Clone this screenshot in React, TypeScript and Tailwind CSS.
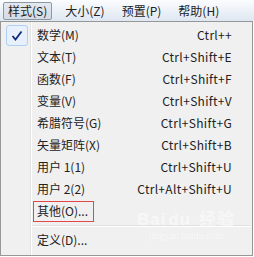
import React from "react";

const topMenus = [
  { label: "样式(S)", active: true },
  { label: "大小(Z)" },
  { label: "预置(P)" },
  { label: "帮助(H)" },
];

const items = [
  { label: "数学(M)", shortcut: "Ctrl++", checked: true },
  { label: "文本(T)", shortcut: "Ctrl+Shift+E" },
  { label: "函数(F)", shortcut: "Ctrl+Shift+F" },
  { label: "变量(V)", shortcut: "Ctrl+Shift+V" },
  { label: "希腊符号(G)", shortcut: "Ctrl+Shift+G" },
  { label: "矢量矩阵(X)", shortcut: "Ctrl+Shift+B" },
  { label: "用户 1(1)", shortcut: "Ctrl+Shift+U" },
  { label: "用户 2(2)", shortcut: "Ctrl+Alt+Shift+U" },
];

const font = { fontFamily: '"Noto Sans CJK SC", "Liberation Sans", sans-serif' };

export default function App() {
  return (
    <div className="w-[254px] h-[257px] bg-white text-[12px] text-[#222] overflow-hidden" style={font}>
      {/* Menu bar */}
      <div className="h-[21px] flex items-center gap-[9px] pl-[3px] bg-linear-to-b from-[#fbfcfe] to-[#dfe7f2]">
        {topMenus.map((m) =>
          m.active ? (
            <div
              key={m.label}
              className="h-[18px] px-[4px] flex items-center border border-[#8e99a8] rounded-[2px] bg-linear-to-b from-[#e4e9f0] to-[#d3dbe6] leading-none"
            >
              {m.label}
            </div>
          ) : (
            <div key={m.label} className="px-[4px] leading-none">
              {m.label}
            </div>
          )
        )}
      </div>

      {/* Dropdown */}
      <div className="relative w-[253px] h-[235px] border border-[#979797] bg-[#f0f0f0] pt-[2px]">
        {/* gutter line */}
        <div className="absolute left-[29px] top-0 bottom-0 w-[2px] border-l border-[#e2e3e3] border-r border-r-white" />

        {items.map((it) => (
          <div key={it.label} className="relative h-[22px] flex items-center">
            <div className="w-[31px] flex justify-center">
              {it.checked && (
                <div className="w-[22px] h-[21px] rounded-[3px] border border-[#aecff7] bg-[#e8f0fb] flex items-center justify-center">
                  <svg width="12" height="11" viewBox="0 0 12 11">
                    <path d="M1.5 6 L4.5 9.5 L10.5 1.5" fill="none" stroke="#0c2a7a" strokeWidth="1.8" />
                  </svg>
                </div>
              )}
            </div>
            <span className="pl-[5px] flex-1">{it.label}</span>
            <span className="pr-[20px] tracking-[0.3px]">{it.shortcut}</span>
          </div>
        ))}

        <div className="relative h-[22px] flex items-center">
          <div className="w-[31px]" />
          <span className="ml-[1px] pl-[3px] pr-[5px] h-[21px] flex items-center border border-[#e0484a]">其他(O)...</span>
        </div>

        {/* separator */}
        <div className="h-[7px] flex items-center pl-[32px] pr-[2px]">
          <div className="flex-1 border-t border-[#e0e0e0] border-b border-b-white" />
        </div>

        <div className="relative h-[22px] flex items-center">
          <div className="w-[31px]" />
          <span className="pl-[5px]">定义(D)...</span>
        </div>

        {/* watermark */}
        <div className="absolute left-[136px] top-[189px] flex flex-col items-center text-white/50 pointer-events-none">
          <span className="text-[17px] font-bold leading-none tracking-[1px]" style={{ fontFamily: '"Liberation Sans", "Noto Sans CJK SC", sans-serif' }}>
            Bai<span className="px-[2px]">du</span> 经验
          </span>
          <span className="text-[10px] leading-none mt-[3px]" style={{ fontFamily: '"Liberation Serif", serif' }}>
            jingyan.baidu.com
          </span>
        </div>
      </div>
    </div>
  );
}
